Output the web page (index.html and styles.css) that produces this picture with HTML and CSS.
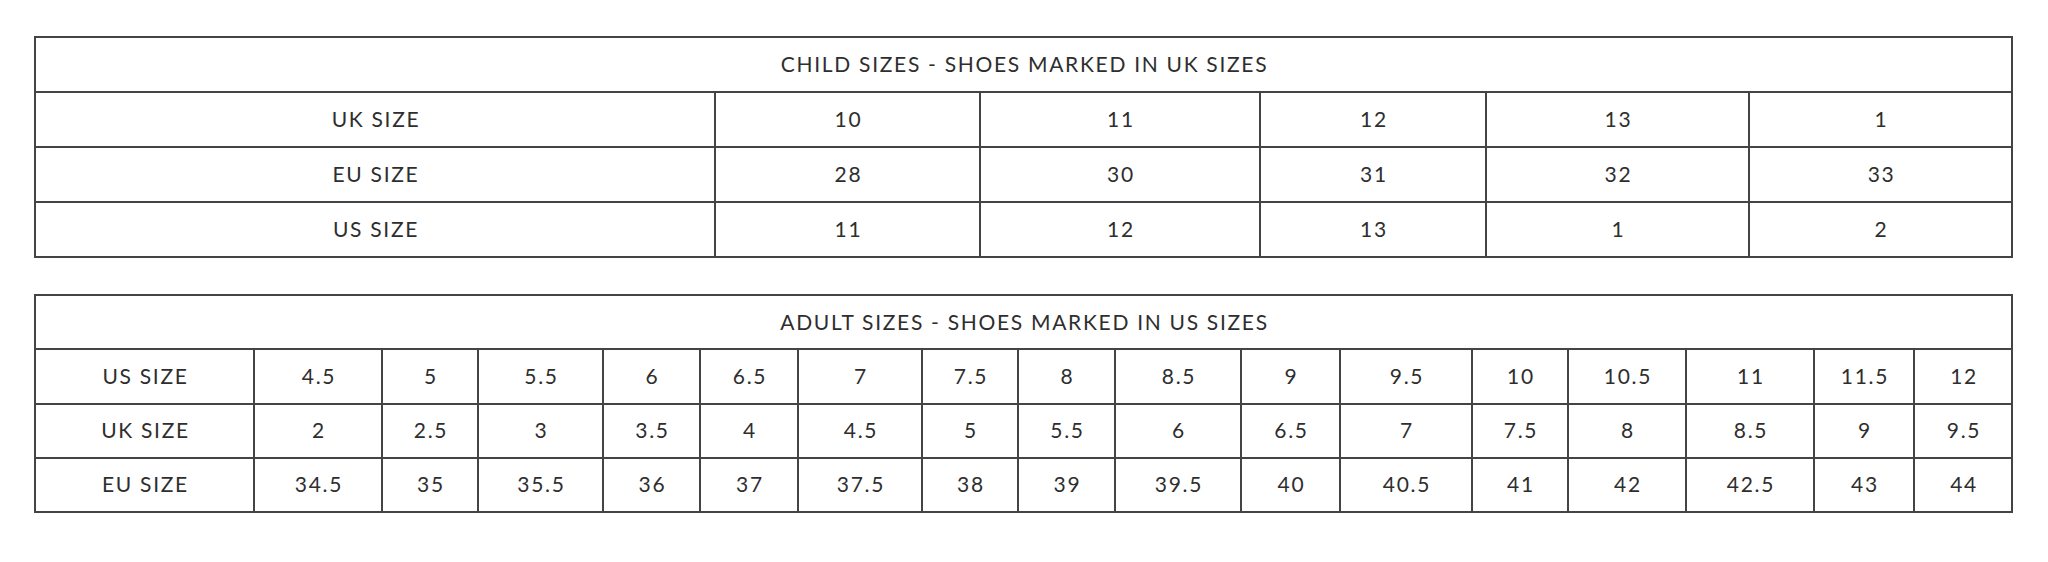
FILE: index.html
```html
<!DOCTYPE html>
<html lang="en">
<head>
<meta charset="utf-8">
<title>Size Guide</title>
<link rel="stylesheet" href="styles.css">
</head>
<body>
<main class="page">
  <table class="size-table child">
    <colgroup>
      <col><col><col><col><col><col>
    </colgroup>
    <thead>
      <tr><th colspan="6">CHILD SIZES - SHOES MARKED IN UK SIZES</th></tr>
    </thead>
    <tbody>
      <tr><td>UK SIZE</td><td>10</td><td>11</td><td>12</td><td>13</td><td>1</td></tr>
      <tr><td>EU SIZE</td><td>28</td><td>30</td><td>31</td><td>32</td><td>33</td></tr>
      <tr><td>US SIZE</td><td>11</td><td>12</td><td>13</td><td>1</td><td>2</td></tr>
    </tbody>
  </table>

  <table class="size-table adult">
    <colgroup>
      <col><col><col><col><col><col><col><col><col><col><col><col><col><col><col><col><col>
    </colgroup>
    <thead>
      <tr><th colspan="17">ADULT SIZES - SHOES MARKED IN US SIZES</th></tr>
    </thead>
    <tbody>
      <tr><td>US SIZE</td><td>4.5</td><td>5</td><td>5.5</td><td>6</td><td>6.5</td><td>7</td><td>7.5</td><td>8</td><td>8.5</td><td>9</td><td>9.5</td><td>10</td><td>10.5</td><td>11</td><td>11.5</td><td>12</td></tr>
      <tr><td>UK SIZE</td><td>2</td><td>2.5</td><td>3</td><td>3.5</td><td>4</td><td>4.5</td><td>5</td><td>5.5</td><td>6</td><td>6.5</td><td>7</td><td>7.5</td><td>8</td><td>8.5</td><td>9</td><td>9.5</td></tr>
      <tr><td>EU SIZE</td><td>34.5</td><td>35</td><td>35.5</td><td>36</td><td>37</td><td>37.5</td><td>38</td><td>39</td><td>39.5</td><td>40</td><td>40.5</td><td>41</td><td>42</td><td>42.5</td><td>43</td><td>44</td></tr>
    </tbody>
  </table>
</main>
</body>
</html>
```

FILE: styles.css
```css
html, body {
  margin: 0;
  padding: 0;
  background: #ffffff;
}

.page {
  padding: 36px 0 0 34px;
  display: flex;
  flex-direction: column;
  gap: 36px;
  align-items: flex-start;
}

.size-table {
  border-collapse: collapse;
  table-layout: fixed;
  width: 1979px;
  font-family: "Lato", "Liberation Sans", sans-serif;
  font-size: 21px;
  letter-spacing: 1.7px;
  color: #2e2e2e;
}

.size-table th,
.size-table td {
  border: 2px solid #444444;
  padding: 0 0 2px 2px;
  text-align: center;
  vertical-align: middle;
  font-weight: 400;
  white-space: nowrap;
}

.child tr { height: 55px; }
.adult tr { height: 54.25px; }

.child col:nth-child(1) { width: 680px; }
.child col:nth-child(2) { width: 265px; }
.child col:nth-child(3) { width: 280px; }
.child col:nth-child(4) { width: 226px; }
.child col:nth-child(5) { width: 263px; }
.child col:nth-child(6) { width: 263px; }

.adult col:nth-child(1) { width: 219px; }
.adult col:nth-child(2) { width: 128px; }
.adult col:nth-child(3) { width: 96px; }
.adult col:nth-child(4) { width: 125px; }
.adult col:nth-child(5) { width: 97px; }
.adult col:nth-child(6) { width: 98px; }
.adult col:nth-child(7) { width: 124px; }
.adult col:nth-child(8) { width: 96px; }
.adult col:nth-child(9) { width: 97px; }
.adult col:nth-child(10) { width: 126px; }
.adult col:nth-child(11) { width: 99px; }
.adult col:nth-child(12) { width: 132px; }
.adult col:nth-child(13) { width: 96px; }
.adult col:nth-child(14) { width: 118px; }
.adult col:nth-child(15) { width: 128px; }
.adult col:nth-child(16) { width: 100px; }
.adult col:nth-child(17) { width: 98px; }
```
